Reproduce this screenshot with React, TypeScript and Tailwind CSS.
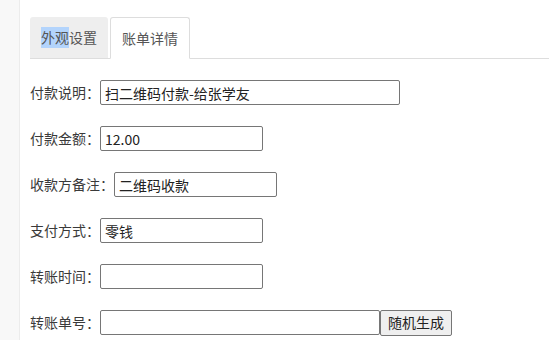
import React from "react";

const font = { fontFamily: '"Noto Sans CJK SC", "Microsoft YaHei", sans-serif' };

function Row({ label, value, wide, children }: { label: string; value?: string; wide?: boolean; children?: React.ReactNode }) {
  return (
    <div className="flex items-center h-[25px] mb-[21px]">
      <span className="text-[14px] text-[#3a3a3a] whitespace-nowrap leading-[25px]">{label}</span>
      <input
        readOnly
        value={value ?? ""}
        className={`${wide ? "w-[300px]" : "w-[163px]"} h-[25px] border border-[#767676] rounded-[2px] px-[4px] text-[14px] text-[#222] outline-none bg-white`}
        style={font}
      />
      {children}
    </div>
  );
}

export default function App() {
  return (
    <div className="flex w-[549px] h-[340px] bg-white overflow-hidden" style={font}>
      <div className="w-[20px] shrink-0 bg-[#f8f8f8] border-r border-[#ececec]" />
      <div className="flex-1 pl-[10px] pt-[17px]">
        <div className="flex items-end border-b border-[#ddd] h-[42px]">
          <div className="h-[41px] px-[11px] flex items-center bg-[#eeeeee] text-[14px] text-[#555] rounded-t-[3px] mr-[2px]">
            <span className="bg-[#b3d4fc]">外观</span>设置
          </div>
          <div className="h-[42px] -mb-px px-[11px] flex items-center bg-white border border-[#ddd] border-b-white rounded-t-[3px] text-[14px] text-[#555]">
            账单详情
          </div>
        </div>
        <div className="pt-[21px]">
          <Row label="付款说明：" value="扫二维码付款-给张学友" wide />
          <Row label="付款金额：" value="12.00" />
          <Row label="收款方备注：" value="二维码收款" />
          <Row label="支付方式：" value="零钱" />
          <Row label="转账时间：" value="" />
          <div className="flex items-center h-[25px]">
            <span className="text-[14px] text-[#3a3a3a] whitespace-nowrap">转账单号：</span>
            <input readOnly value="" className="w-[280px] h-[25px] border border-[#767676] rounded-[2px] px-[4px] text-[14px] outline-none" style={font} />
            <button className="h-[26px] px-[7px] border border-[#767676] rounded-[2px] bg-[#efefef] text-[14px] text-[#222]" style={font}>
              随机生成
            </button>
          </div>
        </div>
      </div>
    </div>
  );
}
